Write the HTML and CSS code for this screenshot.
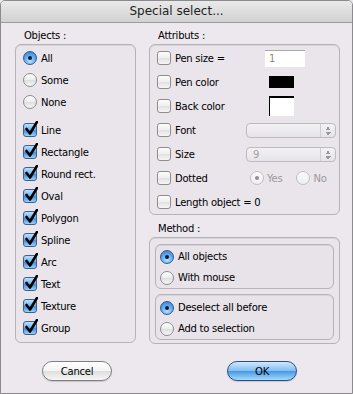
FILE: index.html
```html
<!DOCTYPE html>
<html>
<head>
  <meta charset="UTF-8" />
  <title>Special select...</title>
  <link rel="stylesheet" href="styles.css">
</head>
<body>
  <div class="window">
    <div class="titlebar">Special select...</div>
    <div class="content">
      <div class="columns">
        <div class="col">
          <div class="label">Objects :</div>
          <div class="box objects">
            <div class="row"><span class="radio on"></span>All</div>
            <div class="row"><span class="radio"></span>Some</div>
            <div class="row"><span class="radio"></span>None</div>
            <div class="spacer"></div>
            <div class="row"><span class="check on"></span>Line</div>
            <div class="row"><span class="check on"></span>Rectangle</div>
            <div class="row"><span class="check on"></span>Round rect.</div>
            <div class="row"><span class="check on"></span>Oval</div>
            <div class="row"><span class="check on"></span>Polygon</div>
            <div class="row"><span class="check on"></span>Spline</div>
            <div class="row"><span class="check on"></span>Arc</div>
            <div class="row"><span class="check on"></span>Text</div>
            <div class="row"><span class="check on"></span>Texture</div>
            <div class="row"><span class="check on"></span>Group</div>
          </div>
        </div>

        <div class="col">
          <div class="label">Attributs :</div>
          <div class="box attrs">
            <div class="row"><span class="check"></span>Pen size =<span class="field">1</span></div>
            <div class="row"><span class="check"></span>Pen color<span class="swatch black"></span></div>
            <div class="row"><span class="check"></span>Back color<span class="swatch white"></span></div>
            <div class="row"><span class="check"></span>Font<span class="popup"><span class="value"></span><span class="arrows"></span></span></div>
            <div class="row"><span class="check"></span>Size<span class="popup"><span class="value">9</span><span class="arrows"></span></span></div>
            <div class="row">
              <span class="check"></span>Dotted
              <span class="choices">
                <span class="radio off-on"></span><span class="dim">Yes</span>
                <span class="radio disabled no"></span><span class="dim">No</span>
              </span>
            </div>
            <div class="row"><span class="check"></span>Length object = 0</div>
          </div>

          <div class="label method-label">Method :</div>
          <div class="box method">
            <div class="box inner first">
              <div class="row"><span class="radio on"></span>All objects</div>
              <div class="row"><span class="radio"></span>With mouse</div>
            </div>
            <div class="box inner second">
              <div class="row"><span class="radio on"></span>Deselect all before</div>
              <div class="row"><span class="radio"></span>Add to selection</div>
            </div>
          </div>
        </div>
      </div>

      <div class="buttons">
        <button class="btn">Cancel</button>
        <button class="btn default">OK</button>
      </div>
    </div>
  </div>
</body>
</html>
```

FILE: styles.css
```css
body {
  margin: 0;
  font-family: "DejaVu Sans", Verdana, sans-serif;
  font-size: 10px;
  letter-spacing: -0.25px;
  color: #000;
  background-color: #ece8ee;
}

.window {
  width: 353px;
  height: 394px;
  box-sizing: border-box;
  border: 1px solid #8c8a8e;
  border-radius: 5px 5px 0 0;
  background-color: #ece8ee;
  overflow: hidden;
}

.titlebar {
  height: 21px;
  line-height: 21px;
  text-align: center;
  font-size: 12px;
  letter-spacing: 0;
  color: #1e1e1e;
  background: linear-gradient(#e9e9e9, #d2d2d2);
  border-bottom: 1px solid #9c9c9c;
}

.content {
  padding: 6px 12px 0 14px;
}

.columns {
  display: grid;
  grid-template-columns: 121px 191px;
  column-gap: 13px;
}

.col {
  display: flex;
  flex-direction: column;
}

.label {
  height: 14px;
  line-height: 14px;
  padding-left: 9px;
  margin-bottom: 1px;
}

.method-label {
  margin-top: 7px;
}

.box {
  border: 1px solid #b5b2b8;
  border-radius: 6px;
  background-color: #e9e5eb;
  box-shadow: inset 0 1px 0 #d6d3d9;
}

.objects {
  padding: 2px 0 3px 7px;
}

.attrs {
  padding: 1px 0 0 7px;
}

.method {
  padding: 6px 5px 3px 5px;
}

.inner {
  padding-left: 4px;
  background-color: #e7e3e9;
}

.inner.first {
  padding-top: 1px;
  margin-bottom: 5px;
}

.inner.second {
  padding-top: 2px;
}

.row {
  display: flex;
  align-items: center;
  height: 22px;
  gap: 4px;
  white-space: nowrap;
}

.attrs .row {
  height: 24px;
}

.inner .row {
  height: 21px;
}

.spacer {
  height: 6px;
}

/* checkboxes */
.check {
  flex: none;
  position: relative;
  width: 12px;
  height: 12px;
  border: 1px solid #8d8d8f;
  border-radius: 3px;
  background: linear-gradient(#fdfdfd, #eeeeee 50%, #e2e2e2 51%, #f6f6f6);
}

.check.on {
  border-color: #3d5f8e;
  background: linear-gradient(#bfe0fb, #6fb4ef 45%, #3e8fe0 55%, #9bd3fb);
}

.check.on::after {
  content: "";
  position: absolute;
  left: 1px;
  top: -3px;
  width: 13px;
  height: 14px;
  background: url("data:image/svg+xml;utf8,<svg xmlns='http://www.w3.org/2000/svg' width='13' height='14'><path d='M1.5 8 L5 12.5 L12 1' fill='none' stroke='black' stroke-width='2.6' stroke-linecap='round' stroke-linejoin='round'/></svg>");
}

/* radio buttons */
.radio {
  flex: none;
  position: relative;
  width: 12px;
  height: 12px;
  border: 1px solid #8d8d8f;
  border-radius: 50%;
  background: linear-gradient(#ffffff, #ececec 50%, #dedede 51%, #f7f7f7);
}

.radio.on {
  border-color: #36598a;
  background: radial-gradient(circle at 50% 75%, #b5e0ff, #5aa6ec 55%, #2e78cc);
}

.radio.on::after,
.radio.off-on::after {
  content: "";
  position: absolute;
  left: 4px;
  top: 4px;
  width: 4px;
  height: 4px;
  border-radius: 50%;
  background-color: #0d1a30;
}

.radio.off-on,
.radio.disabled {
  border-color: #c0bec2;
  background: linear-gradient(#fbfbfb, #efedf0);
}

.radio.off-on::after {
  background-color: #8e8c90;
}

.dim {
  color: #9a989c;
}

/* attribute controls */
.field {
  margin-left: auto;
  margin-right: 34px;
  width: 36px;
  height: 16px;
  line-height: 16px;
  padding-left: 4px;
  color: #8a8a8a;
  background-color: #fff;
  border-top: 1px solid #a9a9a9;
}

.swatch {
  margin-left: auto;
  margin-right: 45px;
  width: 25px;
}

.swatch.black {
  height: 12px;
  background-color: #000;
}

.swatch.white {
  height: 20px;
  box-sizing: border-box;
  border-top: 2px solid #000;
  border-left: 1px solid #000;
  background-color: #fff;
}

.popup {
  margin-left: auto;
  margin-right: 3px;
  width: 90px;
  height: 15px;
  box-sizing: border-box;
  display: flex;
  border: 1px solid #bdbbc0;
  border-radius: 4px;
  background: linear-gradient(#f3f1f4, #e6e4e8);
  color: #a2a0a4;
}

.popup .value {
  flex: 1;
  line-height: 13px;
  padding-left: 6px;
}

.popup .arrows {
  width: 14px;
  border-left: 1px solid #d0ced2;
  background:
    linear-gradient(to bottom right, transparent 50%, #9a989c 50%) 4px 3px / 3px 3px no-repeat,
    linear-gradient(to bottom left, transparent 50%, #9a989c 50%) 7px 3px / 3px 3px no-repeat,
    linear-gradient(to top right, transparent 50%, #9a989c 50%) 4px 8px / 3px 3px no-repeat,
    linear-gradient(to top left, transparent 50%, #9a989c 50%) 7px 8px / 3px 3px no-repeat;
}

.choices {
  margin-left: auto;
  margin-right: 10px;
  width: 79px;
  display: flex;
  align-items: center;
  gap: 3px;
}

.radio.no {
  margin-left: 11px;
}

/* bottom buttons */
.buttons {
  display: flex;
  margin-top: 17px;
  padding-left: 27px;
  gap: 115px;
}

.btn {
  width: 70px;
  height: 20px;
  padding: 0;
  font-family: "DejaVu Sans", Verdana, sans-serif;
  font-size: 10px;
  letter-spacing: -0.25px;
  color: #000;
  border: 1px solid #7f7f82;
  border-radius: 10px;
  background: linear-gradient(#ffffff, #f3f3f3 50%, #dedede 51%, #f6f6f6);
  box-shadow: 0 1px 1px rgba(0, 0, 0, 0.15);
}

.btn.default {
  border-color: #2f4e80;
  background: linear-gradient(#cfe8fd, #7fbdf2 50%, #4598e3 51%, #a5dafc);
}
```
